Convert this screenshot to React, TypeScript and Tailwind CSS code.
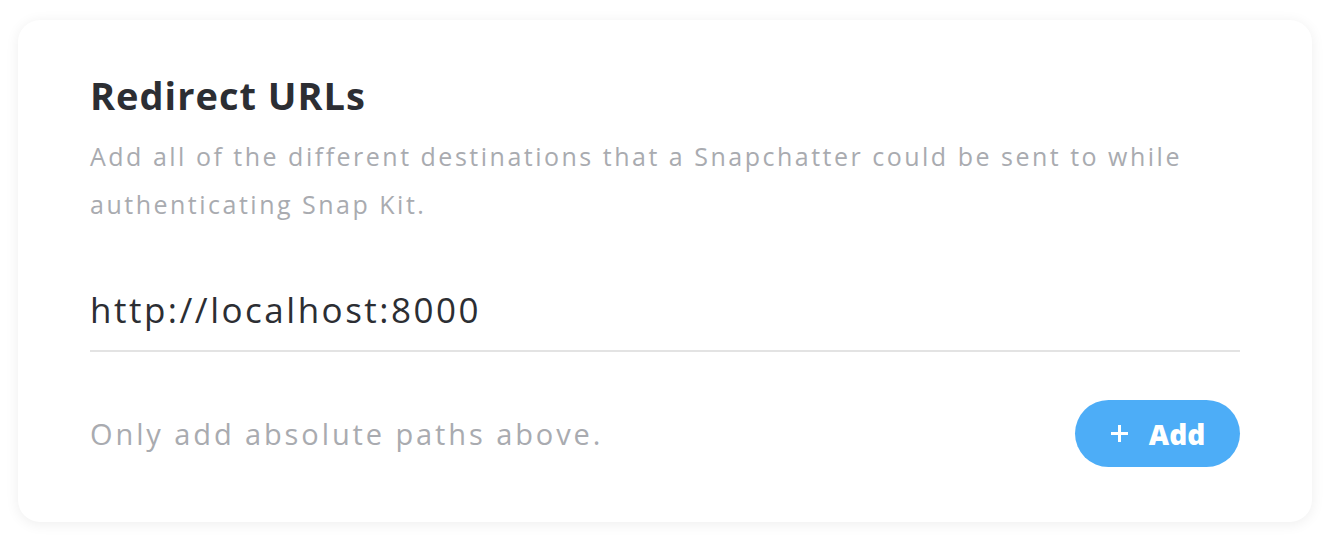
export default function App() {
  return (
    <div className="w-[1332px] h-[544px] bg-white pl-[18px] pr-[20px] pt-[20px] font-['Open_Sans',sans-serif]">
      <div className="h-[502px] rounded-[22px] bg-white shadow-[0_2px_14px_rgba(0,0,0,0.07)] px-[72px] pt-[51px]">
        <h2 className="text-[38px] leading-[48px] font-bold text-[#2c2e33] tracking-[1px]">
          Redirect URLs
        </h2>
        <p className="mt-[13px] text-[25px] leading-[48px] text-[#a9abb0] tracking-[2.5px]">
          Add all of the different destinations that a Snapchatter could be sent to while authenticating Snap Kit.
        </p>

        <div className="mt-[60px] border-b-2 border-[#e3e3e3] pb-[18px]">
          <div className="text-[35px] leading-[44px] text-[#2c2e33] tracking-[2.5px]">
            http://localhost:8000
          </div>
        </div>

        <div className="mt-[48px] flex items-center justify-between">
          <span className="text-[29px] leading-[40px] text-[#a9abb0] tracking-[2.9px]">
            Only add absolute paths above.
          </span>
          <button className="h-[67px] w-[165px] rounded-full bg-[#4dadf7] flex items-center justify-center gap-[20px] text-white">
            <svg width="19" height="19" viewBox="0 0 19 19" className="shrink-0">
              <path d="M9.5 1v17M1 9.5h17" stroke="white" strokeWidth="3" />
            </svg>
            <span className="text-[28px] leading-[40px] font-extrabold">Add</span>
          </button>
        </div>
      </div>
    </div>
  );
}
